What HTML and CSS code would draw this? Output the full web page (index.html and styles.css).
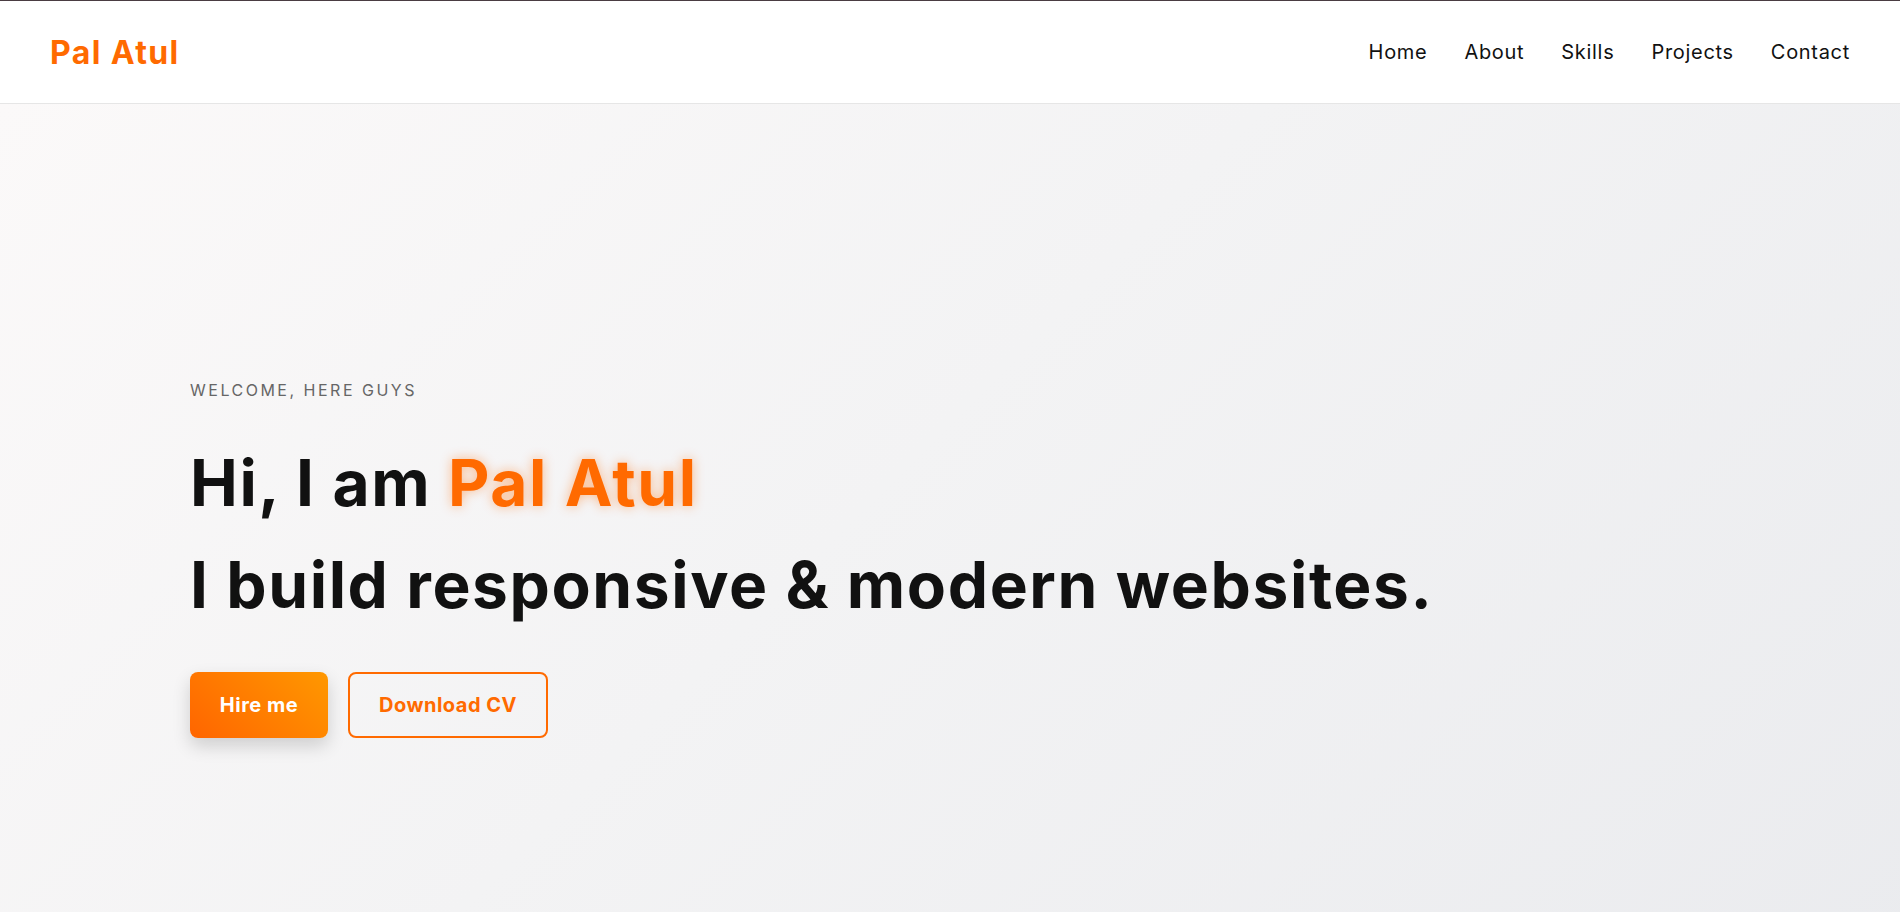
FILE: index.html
```html
<!DOCTYPE html>
<html lang="en">
<head>
<meta charset="utf-8">
<title>Pal Atul</title>
<link rel="stylesheet" href="styles.css">
</head>
<body>
<header class="site-header">
  <a class="logo" href="#">Pal Atul</a>
  <nav class="nav">
    <a href="#">Home</a>
    <a href="#">About</a>
    <a href="#">Skills</a>
    <a href="#">Projects</a>
    <a href="#">Contact</a>
  </nav>
</header>
<section class="hero">
  <div class="hero-content">
    <p class="eyebrow">Welcome, here guys</p>
    <h1 class="headline">Hi, I am <span class="accent">Pal Atul</span><br>I build responsive &amp; modern websites.</h1>
    <div class="actions">
      <a class="btn btn-primary" href="#">Hire me</a>
      <a class="btn btn-outline" href="#">Download CV</a>
    </div>
  </div>
</section>
</body>
</html>
```
FILE: styles.css
```css
* { box-sizing: border-box; }
html, body { margin: 0; padding: 0; }
body {
  font-family: Inter, "Noto Sans", sans-serif;
  color: #111;
  background: #f3f3f4;
}
a { text-decoration: none; color: inherit; }

.site-header {
  height: 104px;
  border-top: 1px solid #4a3c42;
  border-bottom: 1px solid #e6e6e6;
  background: #fff;
  display: flex;
  align-items: center;
  justify-content: space-between;
  padding: 0 50px 0 50px;
}
.logo {
  color: #ff6a00;
  font-weight: 700;
  font-size: 32px;
  letter-spacing: 1.4px;
}
.nav {
  display: flex;
  gap: 37px;
}
.nav a {
  font-size: 20px;
  color: #111;
  font-weight: 400;
  letter-spacing: 0.7px;
}

.hero {
  min-height: 100vh;
  display: flex;
  align-items: center;
  padding: 0 190px;
  background: linear-gradient(135deg, #fbf9f9 0%, #f3f3f4 45%, #eaebee 100%);
}
.hero-content {
  padding-bottom: 4px;
}
.eyebrow {
  margin: 0 0 30px;
  font-size: 16px;
  line-height: 24px;
  letter-spacing: 2.5px;
  text-transform: uppercase;
  color: #666;
}
.headline {
  margin: 0;
  font-size: 64px;
  line-height: 102px;
  font-weight: 700;
  color: #111;
  letter-spacing: 1.6px;
}
.accent {
  color: #ff6a00;
  text-shadow: 0 0 12px rgba(255, 106, 0, 0.45);
}
.actions {
  display: flex;
  gap: 20px;
  margin-top: 36px;
}
.btn {
  display: inline-flex;
  align-items: center;
  justify-content: center;
  height: 66px;
  border-radius: 8px;
  font-weight: 700;
  font-size: 20px;
  letter-spacing: 0.5px;
}
.btn-primary {
  width: 138px;
  color: #fff;
  background: linear-gradient(45deg, #ff6500, #ff9800);
  box-shadow: 0 8px 18px rgba(0, 0, 0, 0.16);
}
.btn-outline {
  width: 200px;
  color: #ff6a00;
  border: 2px solid #ff6a00;
  background: transparent;
}
```
